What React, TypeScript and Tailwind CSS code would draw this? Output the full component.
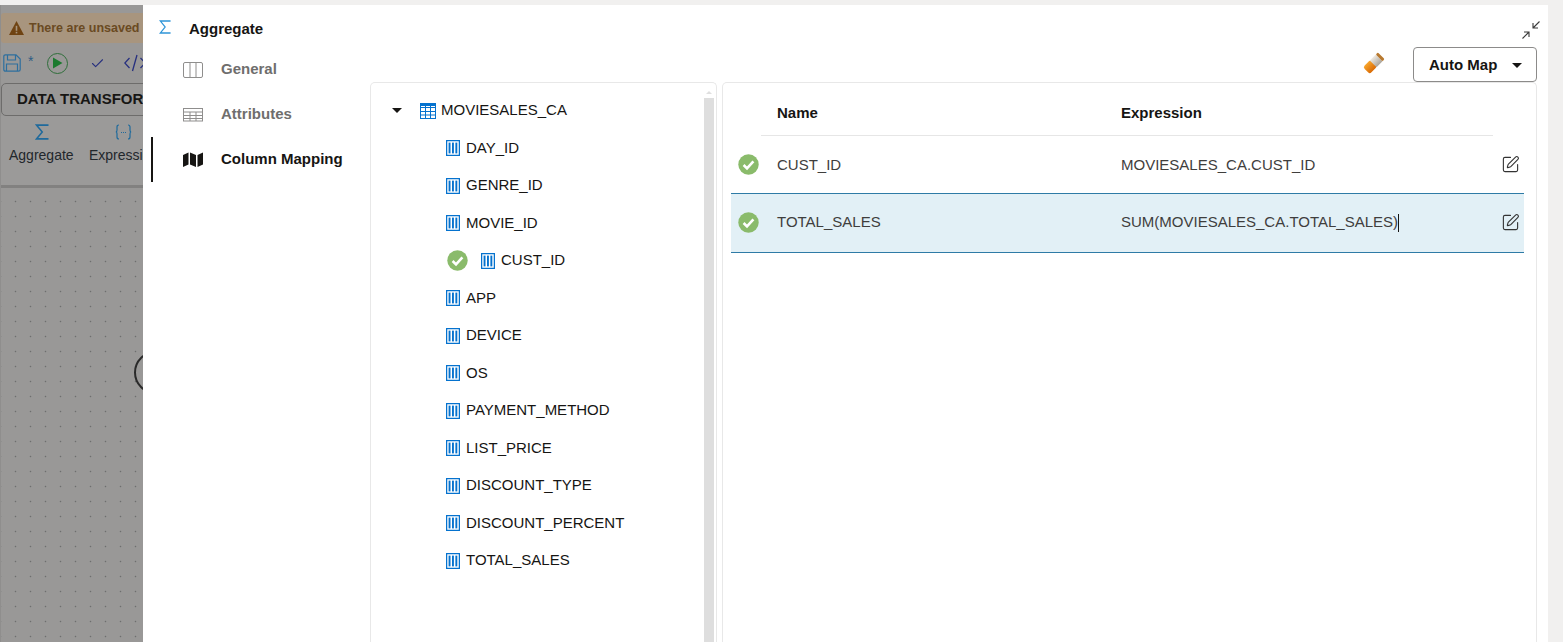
import React from "react";
import { SquarePen, Check } from "lucide-react";

const fields = ["DAY_ID", "GENRE_ID", "MOVIE_ID", "CUST_ID", "APP", "DEVICE", "OS", "PAYMENT_METHOD", "LIST_PRICE", "DISCOUNT_TYPE", "DISCOUNT_PERCENT", "TOTAL_SALES"];

function CheckBadge() {
  return (
    <svg width="21" height="21" viewBox="0 0 21 21" className="shrink-0">
      <circle cx="10.5" cy="10.5" r="10.2" fill="#8abb6b" />
      <path d="M5.6 11 L9 14.4 L15.4 7.4" fill="none" stroke="#fff" strokeWidth="2.6" />
    </svg>
  );
}

function ColumnIcon() {
  return (
    <svg width="14" height="16" viewBox="0 0 14 16" className="shrink-0">
      <rect x="0.6" y="0.6" width="12.8" height="14.8" fill="#fff" stroke="#0572ce" strokeWidth="1.3" />
      <rect x="2.6" y="2.6" width="1.9" height="10.8" fill="#0572ce" />
      <rect x="6" y="2.6" width="1.9" height="10.8" fill="#0572ce" />
      <rect x="9.4" y="2.6" width="1.9" height="10.8" fill="#0572ce" />
    </svg>
  );
}

function TableIcon() {
  return (
    <svg width="16" height="16" viewBox="0 0 16 16" className="shrink-0">
      <rect x="0.5" y="0.5" width="15" height="15" fill="#fff" stroke="#0572ce" />
      <path d="M0 4.5H16M0 8.5H16M0 12H16M5.5 3V16M10.5 3V16" stroke="#0572ce" strokeWidth="1" fill="none" />
      <rect x="0" y="0" width="16" height="3" fill="#0572ce" />
    </svg>
  );
}

function Sigma({ color, w = 14, h = 14, sw = 1.2 }: { color: string; w?: number; h?: number; sw?: number }) {
  return (
    <svg width={w} height={h} viewBox="0 0 14 14" preserveAspectRatio="none" className="shrink-0">
      <path d="M13.5 1 H1.5 L7.2 7 L1.5 13 H13.5" fill="none" stroke={color} strokeWidth={sw} />
    </svg>
  );
}

function NavItem({ icon, label, active }: { icon: React.ReactNode; label: string; active?: boolean }) {
  return (
    <div className="h-[45px] flex items-center ml-2">
      <div className={`w-[2px] h-[45px] ${active ? "bg-[#161513]" : "bg-transparent"}`} />
      <div className="w-[20px] ml-[30px] flex justify-center shrink-0">{icon}</div>
      <span className={`ml-[18px] text-[15px] font-bold whitespace-nowrap ${active ? "text-[#161513]" : "text-[#6f6e6d]"}`}>{label}</span>
    </div>
  );
}

export default function App() {
  return (
    <div className="w-[1563px] h-[642px] overflow-hidden bg-[#f1f0ef] pt-[5px] flex font-['Liberation_Sans',Arial,sans-serif]">
      {/* dimmed page behind the dialog */}
      <div className="w-[143px] shrink-0 h-full bg-[#999897] overflow-hidden flex flex-col border-l border-[#8f8e8d]">
        <div className="mt-[8px] h-[30px] w-[200px] bg-[#a8957e] rounded-l-[3px] flex items-center pl-[8px] gap-[5px] shrink-0">
          <svg width="15" height="14" viewBox="0 0 15 14" className="shrink-0">
            <path d="M7.5 0 L15 14 H0 Z" fill="#6f4312" />
            <rect x="6.7" y="4.8" width="1.6" height="5" fill="#a8957e" />
            <rect x="6.7" y="10.8" width="1.6" height="1.6" fill="#a8957e" />
          </svg>
          <span className="text-[12.5px] font-bold text-[#6a4a22] whitespace-nowrap">There are unsaved changes</span>
        </div>
        <div className="h-[40px] flex items-center shrink-0 pl-[2px] w-[200px]">
          <svg width="18" height="18" viewBox="0 0 18 18" fill="none" stroke="#2e6f9e" strokeWidth="1.2" className="shrink-0">
            <path d="M1.5 0.8 H13 L17.2 5 V15.5 Q17.2 17.2 15.5 17.2 H2.5 Q0.8 17.2 0.8 15.5 V2.5 Q0.8 0.8 2.5 0.8 Z" />
            <path d="M4.5 1 V6 H12.5 V1 M3.5 17 V10 H14.5 V17" />
          </svg>
          <span className="text-[14px] text-[#2e5d84] ml-[7px] -mt-1">*</span>
          <span className="ml-[14px] w-[21px] h-[21px] rounded-full border-[1.5px] border-[#2f6e3a] flex items-center justify-center shrink-0">
            <svg width="11" height="12" viewBox="0 0 11 12"><path d="M1 0.5 L10.5 6 L1 11.5 Z" fill="#1c7a2f" /></svg>
          </span>
          <Check size={15} strokeWidth={1.7} className="ml-[22px] text-[#27307f] shrink-0" />
          <svg width="22" height="18" viewBox="0 0 22 18" fill="none" stroke="#27307f" strokeWidth="1.3" className="ml-[19px] shrink-0">
            <path d="M5.5 4 L0.8 9 L5.5 14 M13 1 L8.5 17 M16.5 4 L21.2 9 L16.5 14" />
          </svg>
        </div>
        <div className="h-[33px] w-[200px] shrink-0 rounded-l-[5px] border border-[#6d6c6b] flex items-center pl-[15px] text-[15px] font-bold text-[#171614] whitespace-nowrap">DATA TRANSFORMS</div>
        <div className="flex shrink-0 h-[69px] w-[200px] pt-[8px] bg-[#9b9a99]">
          <div className="w-[88px] pl-[8px] flex flex-col">
            <div className="pl-[26px]"><Sigma color="#1f6a9c" w={14} h={16} sw={1.5} /></div>
            <span className="text-[14px] text-[#22272c] mt-[7px] leading-[16px]">Aggregate</span>
          </div>
          <div className="flex flex-col">
            <svg width="17" height="16" viewBox="0 0 17 16" fill="none" stroke="#1f6a9c" strokeWidth="1.2" className="ml-[26px] shrink-0">
              <path d="M4 1 Q2 1 2 3 V6 Q2 8 0.8 8 Q2 8 2 10 V13 Q2 15 4 15 M13 1 Q15 1 15 3 V6 Q15 8 16.2 8 Q15 8 15 10 V13 Q15 15 13 15" />
              <path d="M6 8.5H7 M8 8.5H9 M10 8.5H11" />
            </svg>
            <span className="text-[14px] text-[#22272c] mt-[7px] leading-[16px] whitespace-nowrap">Expression</span>
          </div>
        </div>
        <div className="h-[3px] bg-[#828180] shrink-0" />
        <div className="flex-1 w-[200px] relative bg-[radial-gradient(circle,#6e6e6e_0.8px,transparent_1.05px)] bg-[length:15px_15px] bg-[position:7px_6px]">
          <div className="absolute left-[133px] top-[163px] w-[43px] h-[43px] rounded-full border-2 border-[#2a2a2a]" />
        </div>
      </div>

      {/* dialog */}
      <div className="w-[1405px] shrink-0 h-full bg-white flex">
        {/* navigation */}
        <div className="w-[227px] shrink-0 flex flex-col">
          <div className="h-[42px] flex items-center pl-[16px] pt-[6px] shrink-0">
            <div className="-mt-[4px]"><Sigma color="#2f95d8" w={12} h={14} sw={1.3} /></div>
            <span className="ml-[18px] text-[15px] font-bold text-[#161513]">Aggregate</span>
          </div>
          <NavItem
            label="General"
            icon={
              <svg width="20" height="16" viewBox="0 0 20 16">
                <rect x="0.5" y="0.5" width="19" height="15" rx="1.5" fill="none" stroke="#8f8e8d" />
                <path d="M7 0.5V15.5M13 0.5V15.5" stroke="#8f8e8d" />
              </svg>
            }
          />
          <NavItem
            label="Attributes"
            icon={
              <svg width="20" height="14" viewBox="0 0 20 14">
                <rect x="0.5" y="0.5" width="19" height="12.5" fill="none" stroke="#8f8e8d" />
                <path d="M0 4H20M0 7.5H20M0 10.5H20M7 4V13M13 4V13" stroke="#8f8e8d" />
              </svg>
            }
          />
          <NavItem
            active
            label="Column Mapping"
            icon={
              <svg width="20" height="15" viewBox="0 0 20 15">
                <path d="M0 3 L5.5 0.5 V12.5 L0 15 Z M7 0.5 L13 3 V15 L7 12.5 Z M14.5 3 L20 0.5 V12.5 L14.5 15 Z" fill="#161513" />
              </svg>
            }
          />
        </div>

        {/* content */}
        <div className="w-[1167px] shrink-0 flex flex-col">
          <div className="h-[77px] shrink-0 flex flex-col items-end pt-[16px]">
            <svg width="18" height="18" viewBox="0 0 18 18" fill="none" stroke="#3a3a3a" strokeWidth="1.1" className="-mr-[3px] shrink-0">
              <path d="M17.5 0.5 L11 7 M11 2 V7 H16" />
              <path d="M0.5 17.5 L7 11 M2 11 H7 V16" />
            </svg>
            <div className="flex items-center mt-[8px]">
              <svg width="24" height="24" viewBox="0 0 20 20" className="mr-[27px] -mt-[3px]">
                <defs>
                  <linearGradient id="er" x1="0" y1="0" x2="0" y2="1">
                    <stop offset="0" stopColor="#f7a52d" />
                    <stop offset="1" stopColor="#d96a05" />
                  </linearGradient>
                  <linearGradient id="mid" x1="0" y1="0" x2="0" y2="1">
                    <stop offset="0" stopColor="#efeae2" />
                    <stop offset="1" stopColor="#a9a39a" />
                  </linearGradient>
                </defs>
                <g transform="rotate(-45 10 10)">
                  <rect x="1" y="6" width="9" height="8" rx="2" fill="url(#er)" />
                  <rect x="9" y="6" width="7" height="8" fill="url(#mid)" />
                  <rect x="16" y="6" width="2.5" height="8" rx="1" fill="#b8792f" />
                </g>
              </svg>
              <button className="w-[124px] h-[35px] pt-[2px] border border-[#8c8b8a] rounded-[4px] bg-white flex items-center pl-[15px] text-[15px] font-bold text-[#161513]">
                Auto Map
                <span className="ml-[15px] w-0 h-0 border-x-[5px] border-x-transparent border-t-[5px] border-t-[#161513]" />
              </button>
            </div>
          </div>

          <div className="flex-1 flex gap-[5px] min-h-0">
            {/* source tree */}
            <div className="w-[347px] shrink-0 border border-[#e8e8e8] border-b-0 rounded-t-[5px] flex">
              <div className="flex-1 pl-[21px] pt-[8.8px] text-[15px] text-[#161513]">
                <div className="h-[37.5px] flex items-center">
                  <span className="w-0 h-0 border-x-[5px] border-x-transparent border-t-[5px] border-t-[#161513]" />
                  <span className="ml-[18px]"><TableIcon /></span>
                  <span className="ml-[5px]">MOVIESALES_CA</span>
                </div>
                {fields.map((f) =>
                  f === "CUST_ID" ? (
                    <div key={f} className="h-[37.5px] flex items-center pl-[55px]">
                      <CheckBadge />
                      <span className="ml-[13px]"><ColumnIcon /></span>
                      <span className="ml-[6px]">{f}</span>
                    </div>
                  ) : (
                    <div key={f} className="h-[37.5px] flex items-center pl-[54px]">
                      <ColumnIcon />
                      <span className="ml-[6px]">{f}</span>
                    </div>
                  )
                )}
              </div>
              <div className="w-[10px] mr-[2px] shrink-0 flex flex-col mt-[3px]">
                <div className="h-[12px] flex justify-center items-center">
                  <span className="w-0 h-0 border-x-[3px] border-x-transparent border-b-[3px] border-b-[#dfdfdf]" />
                </div>
                <div className="flex-1 bg-[#dedede]" />
              </div>
            </div>

            {/* mapping table */}
            <div className="w-[815px] shrink-0 border border-[#e8e8e8] border-b-0 rounded-t-[5px] flex flex-col pl-[8px] pr-[12px] text-[15px]">
              <div className="h-[53px] pt-[8px] ml-[30px] mr-[31px] border-b border-[#e6e6e6] flex items-center shrink-0 font-bold text-[15px] text-[#161513]">
                <span className="w-[360px] pl-[16px]">Name</span>
                <span>Expression</span>
              </div>
              <div className="h-[57px] flex items-center shrink-0 text-[#3f3e3d]">
                <span className="w-[30px] pl-[7px] shrink-0"><CheckBadge /></span>
                <span className="w-[360px] pl-[16px] pt-[2px] shrink-0">CUST_ID</span>
                <span className="flex-1 pt-[2px]">MOVIESALES_CA.CUST_ID</span>
                <SquarePen size={19} strokeWidth={1.4} className="text-[#333333] mr-[4px]" />
              </div>
              <div className="h-[60px] pb-[1px] flex items-center shrink-0 bg-[#e2f0f6] border-y border-[#2e7ba6] text-[#3f3e3d]">
                <span className="w-[30px] pl-[7px] shrink-0"><CheckBadge /></span>
                <span className="w-[360px] pl-[16px] shrink-0">TOTAL_SALES</span>
                <span className="flex-1">
                  SUM(MOVIESALES_CA.TOTAL_SALES)<span className="inline-block w-px h-[18px] bg-[#161513] align-middle" />
                </span>
                <SquarePen size={19} strokeWidth={1.4} className="text-[#333333] mr-[4px]" />
              </div>
            </div>
          </div>
        </div>
      </div>
    </div>
  );
}
